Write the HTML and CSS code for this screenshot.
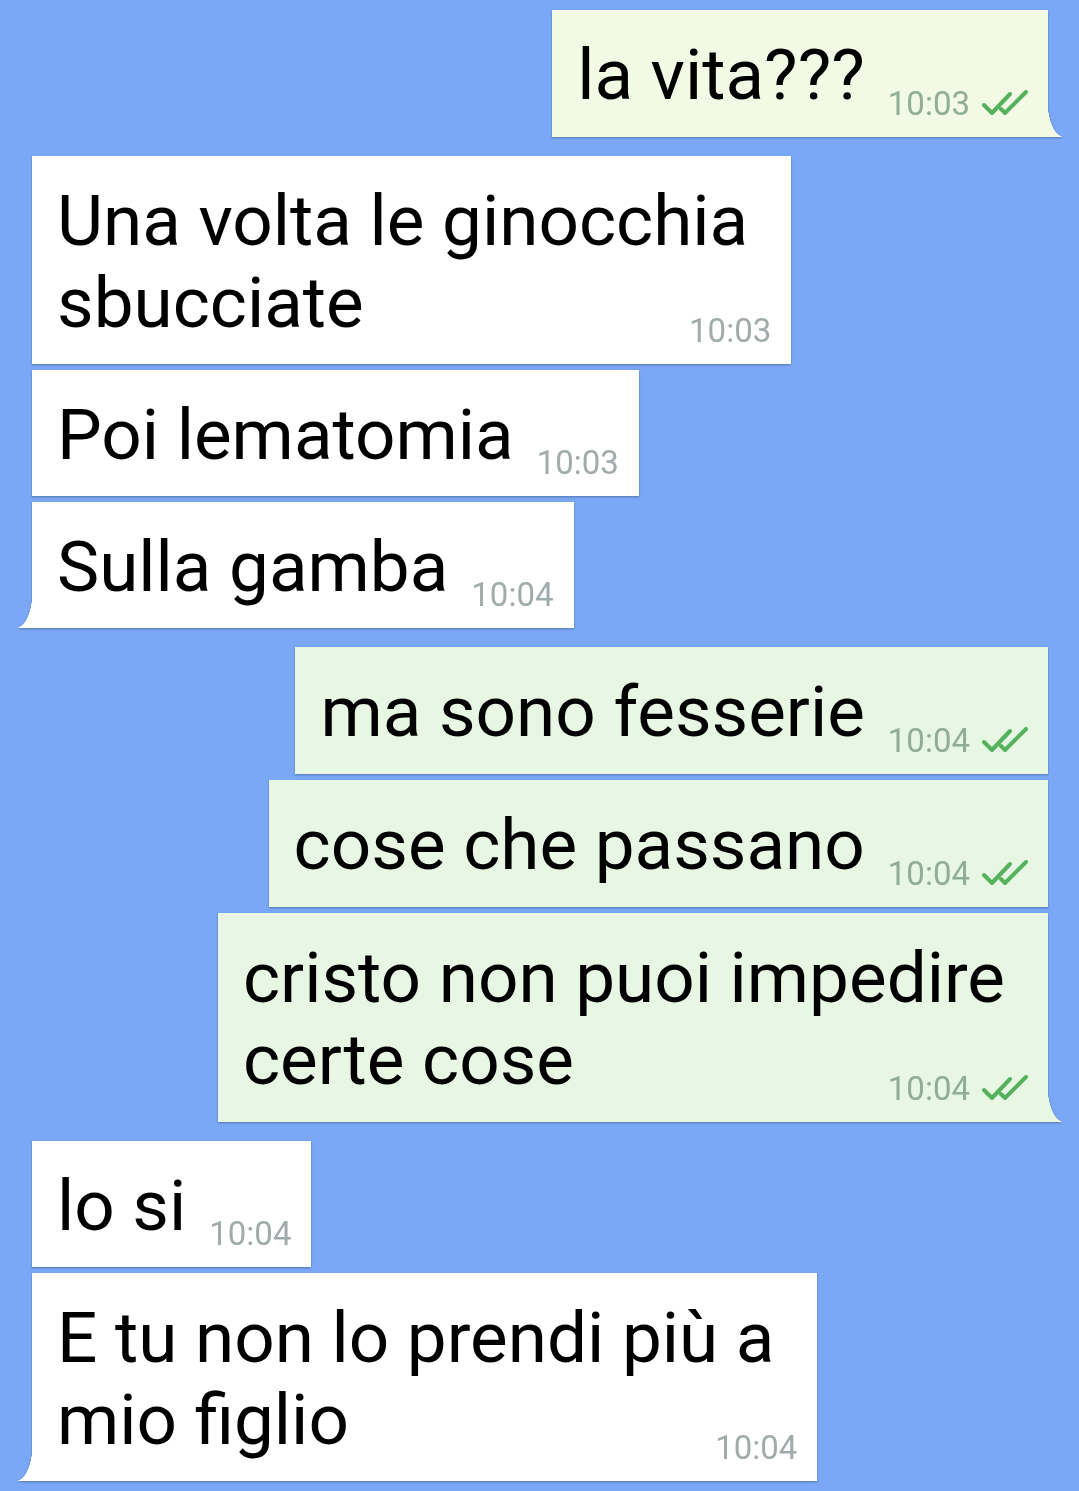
FILE: index.html
```html
<!DOCTYPE html>
<html lang="it">
<head>
  <meta charset="UTF-8" />
  <meta name="viewport" content="width=device-width, initial-scale=1.0" />
  <title>Chat</title>
  <link rel="stylesheet" href="styles.css">
</head>
<body>
  <div class="chat">
    <div class="row out">
      <div class="bubble sent pale tail-right">la vita???
        <span class="meta">10:03<svg class="ticks" viewBox="0 0 46 26" width="46" height="26"><path d="M2 15 L10 23 L28 4"/><path d="M19 19 L23 23 L44 2"/></svg></span>
      </div>
    </div>

    <div class="row group">
      <div class="bubble multi">Una volta le ginocchia<br>sbucciate
        <span class="meta">10:03</span>
      </div>
    </div>
    <div class="row">
      <div class="bubble">Poi lematomia
        <span class="meta">10:03</span>
      </div>
    </div>
    <div class="row">
      <div class="bubble tail-left">Sulla gamba
        <span class="meta">10:04</span>
      </div>
    </div>

    <div class="row out group">
      <div class="bubble sent">ma sono fesserie
        <span class="meta">10:04<svg class="ticks" viewBox="0 0 46 26" width="46" height="26"><path d="M2 15 L10 23 L28 4"/><path d="M19 19 L23 23 L44 2"/></svg></span>
      </div>
    </div>
    <div class="row out">
      <div class="bubble sent">cose che passano
        <span class="meta">10:04<svg class="ticks" viewBox="0 0 46 26" width="46" height="26"><path d="M2 15 L10 23 L28 4"/><path d="M19 19 L23 23 L44 2"/></svg></span>
      </div>
    </div>
    <div class="row out">
      <div class="bubble sent multi tail-right">cristo non puoi impedire<br>certe cose
        <span class="meta">10:04<svg class="ticks" viewBox="0 0 46 26" width="46" height="26"><path d="M2 15 L10 23 L28 4"/><path d="M19 19 L23 23 L44 2"/></svg></span>
      </div>
    </div>

    <div class="row group">
      <div class="bubble">lo si
        <span class="meta">10:04</span>
      </div>
    </div>
    <div class="row">
      <div class="bubble multi tail-left">E tu non lo prendi più a<br>mio figlio
        <span class="meta">10:04</span>
      </div>
    </div>
  </div>
</body>
</html>
```

FILE: styles.css
```css
body {
  margin: 0;
  background: #7aa8f6;
  font-family: Roboto, "Noto Sans", sans-serif;
}

.chat {
  display: flex;
  flex-direction: column;
  gap: 6px;
  padding: 10px 31px 8px 32px;
}

.row {
  display: flex;
}

.row.out {
  justify-content: flex-end;
}

.row.group {
  margin-top: 13px;
}

.bubble {
  position: relative;
  padding: 24px 20px 20px 25px;
  font-size: 71px;
  line-height: 82px;
  color: #000;
  background: #fff;
  filter: drop-shadow(0 1px 1px rgba(0, 0, 0, 0.3));
}

.bubble.sent {
  background: #e7f7e4;
}

.bubble.sent.pale {
  background: #f2f9e5;
}

.bubble.multi {
  padding-right: 43px;
}

.meta {
  float: right;
  margin: 56px 0 0 23px;
  font-size: 33px;
  line-height: 26px;
  color: #a2abab;
}

.multi .meta {
  margin-right: -23px;
}

.sent .meta {
  color: #91ad96;
}

.ticks {
  margin-left: 12px;
  vertical-align: -1px;
  fill: none;
  stroke: #55b15b;
  stroke-width: 4;
  stroke-linecap: round;
  stroke-linejoin: round;
}

/* bubble tails */
.tail-right::after,
.tail-left::after {
  content: "";
  position: absolute;
  bottom: 0;
  width: 16px;
  height: 40px;
}

.tail-right::after {
  right: -15px;
  background: radial-gradient(ellipse 16px 40px at 100% 0, transparent 97%, #e7f7e4 100%);
  border-bottom-right-radius: 3px;
}

.tail-right.pale::after {
  background: radial-gradient(ellipse 16px 40px at 100% 0, transparent 97%, #f2f9e5 100%);
}

.tail-left::after {
  left: -15px;
  background: radial-gradient(ellipse 16px 40px at 0 0, transparent 97%, #fff 100%);
  border-bottom-left-radius: 3px;
}
```
